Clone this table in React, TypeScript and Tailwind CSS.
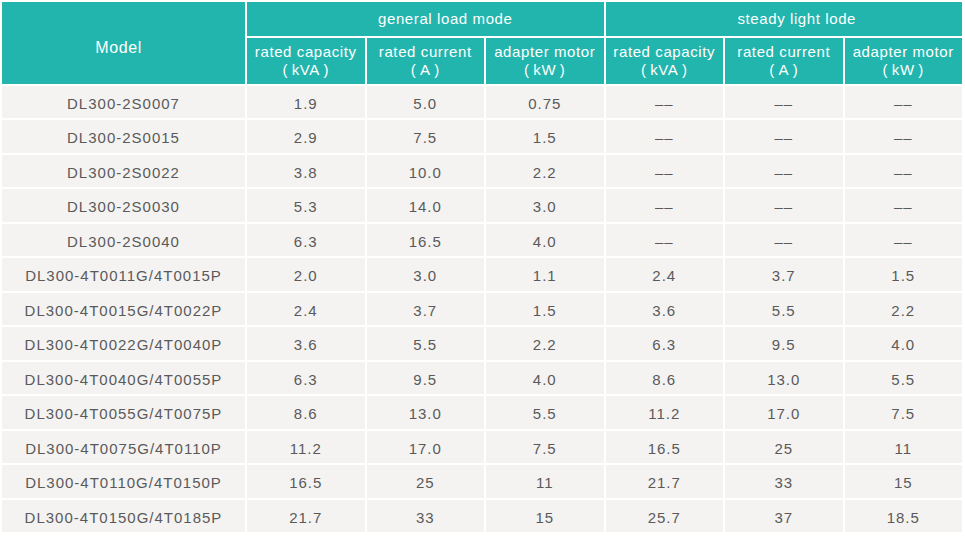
const rows: string[][] = [
  ['DL300-2S0007', '1.9', '5.0', '0.75', '––', '––', '––'],
  ['DL300-2S0015', '2.9', '7.5', '1.5', '––', '––', '––'],
  ['DL300-2S0022', '3.8', '10.0', '2.2', '––', '––', '––'],
  ['DL300-2S0030', '5.3', '14.0', '3.0', '––', '––', '––'],
  ['DL300-2S0040', '6.3', '16.5', '4.0', '––', '––', '––'],
  ['DL300-4T0011G/4T0015P', '2.0', '3.0', '1.1', '2.4', '3.7', '1.5'],
  ['DL300-4T0015G/4T0022P', '2.4', '3.7', '1.5', '3.6', '5.5', '2.2'],
  ['DL300-4T0022G/4T0040P', '3.6', '5.5', '2.2', '6.3', '9.5', '4.0'],
  ['DL300-4T0040G/4T0055P', '6.3', '9.5', '4.0', '8.6', '13.0', '5.5'],
  ['DL300-4T0055G/4T0075P', '8.6', '13.0', '5.5', '11.2', '17.0', '7.5'],
  ['DL300-4T0075G/4T0110P', '11.2', '17.0', '7.5', '16.5', '25', '11'],
  ['DL300-4T0110G/4T0150P', '16.5', '25', '11', '21.7', '33', '15'],
  ['DL300-4T0150G/4T0185P', '21.7', '33', '15', '25.7', '37', '18.5'],
]

const subHeads = [
  ['rated capacity', '(\u2009kVA\u2009)'],
  ['rated current', '(\u2009A\u2009)'],
  ['adapter motor', '(\u2009kW\u2009)'],
]

function SubHead({ top, bottom }: { top: string; bottom: string }) {
  return (
    <div className="flex flex-col items-center justify-center bg-[#22b5ad] text-[15px] leading-[18px] tracking-[0.6px] text-white">
      <span>{top}</span>
      <span>{bottom}</span>
    </div>
  )
}

export default function App() {
  return (
    <div
      className="h-[536px] w-[965px] bg-white p-[2px] pr-[3px]"
      style={{ fontFamily: '"Liberation Sans", Arial, sans-serif' }}
    >
      <div className="grid h-[530px] grid-cols-[243px_repeat(6,1fr)] grid-rows-[34px_46px_repeat(13,1fr)] gap-[2px]">
        {/* Header */}
        <div className="row-span-2 flex items-center justify-center bg-[#22b5ad] pr-[10px] pt-[10px] text-[16px] tracking-[0.6px] text-white">
          Model
        </div>
        <div className="col-span-3 flex items-center justify-center bg-[#22b5ad] pl-[40px] pt-[1px] text-[15px] tracking-[0.6px] text-white">
          general load mode
        </div>
        <div className="col-span-3 flex items-center justify-center bg-[#22b5ad] pl-[26px] pt-[1px] text-[15px] tracking-[0.6px] text-white">
          steady light lode
        </div>
        {[...subHeads, ...subHeads].map(([t, b], i) => (
          <SubHead key={i} top={t} bottom={b} />
        ))}

        {/* Body */}
        {rows.map((r, ri) =>
          r.map((cell, ci) => (
            <div
              key={`${ri}-${ci}`}
              className="flex items-center justify-center bg-[#f4f3f2] pt-[4px] text-[15px] tracking-[1px] text-[#5a5a5a]"
            >
              {cell}
            </div>
          )),
        )}
      </div>
    </div>
  )
}
